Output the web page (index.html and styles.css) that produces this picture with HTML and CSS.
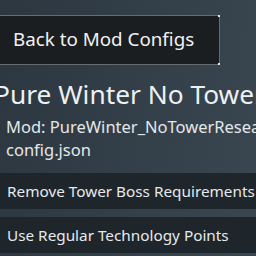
FILE: index.html
```html
<!DOCTYPE html>
<html><head><link rel="stylesheet" href="styles.css"></head>
<body>
<div class="page">
  <div class="panel">
    <div class="back">Back to Mod Configs</div>
    <h1 class="title">Pure Winter No Tower Research</h1>
    <div class="meta first">Mod: PureWinter_NoTowerResearch</div>
    <div class="meta">config.json</div>
    <div class="rows">
      <div class="row">Remove Tower Boss Requirements</div>
      <div class="row">Use Regular Technology Points</div>
    </div>
  </div>
</div>
</body></html>
```
FILE: styles.css
```css
html,body{margin:0;padding:0;height:100%;overflow:hidden}
body{background:linear-gradient(100deg,#2c3740 0%,#34404a 60%,#3a4751 100%);font-family:"Noto Sans",sans-serif;color:#e8ecee}
.page{width:256px;height:256px;overflow:hidden}
.panel{margin-left:-20px;padding-top:15px;width:420px}
.back{position:relative;box-sizing:border-box;width:240px;height:50px;background:#1b1e21;border-top:1px solid #676c70;border-bottom:1px solid #676c70;border-right:1px solid #676c70;padding-left:33px;font-size:18.8px;line-height:47px;white-space:nowrap;color:#f2f2f2}
.back::before,.back::after{content:"";position:absolute;right:-1px;width:2px;height:2px;background:#e6e9eb}
.back::before{top:-1px}
.back::after{bottom:-1px}
.title{margin:11px 0 0 14px;font-size:26.3px;font-weight:400;line-height:36px;white-space:nowrap;color:#eef1f3}
.meta{margin-left:26px;font-size:16.5px;line-height:23px;white-space:nowrap;color:#e4e8ea}
.meta.first{margin-top:3px}
.rows{margin-top:12px;display:flex;flex-direction:column;gap:8px}
.row{background:#1e252b;height:36px;line-height:36px;padding-left:27px;font-size:15.3px;white-space:nowrap;color:#e6eaec}
```
